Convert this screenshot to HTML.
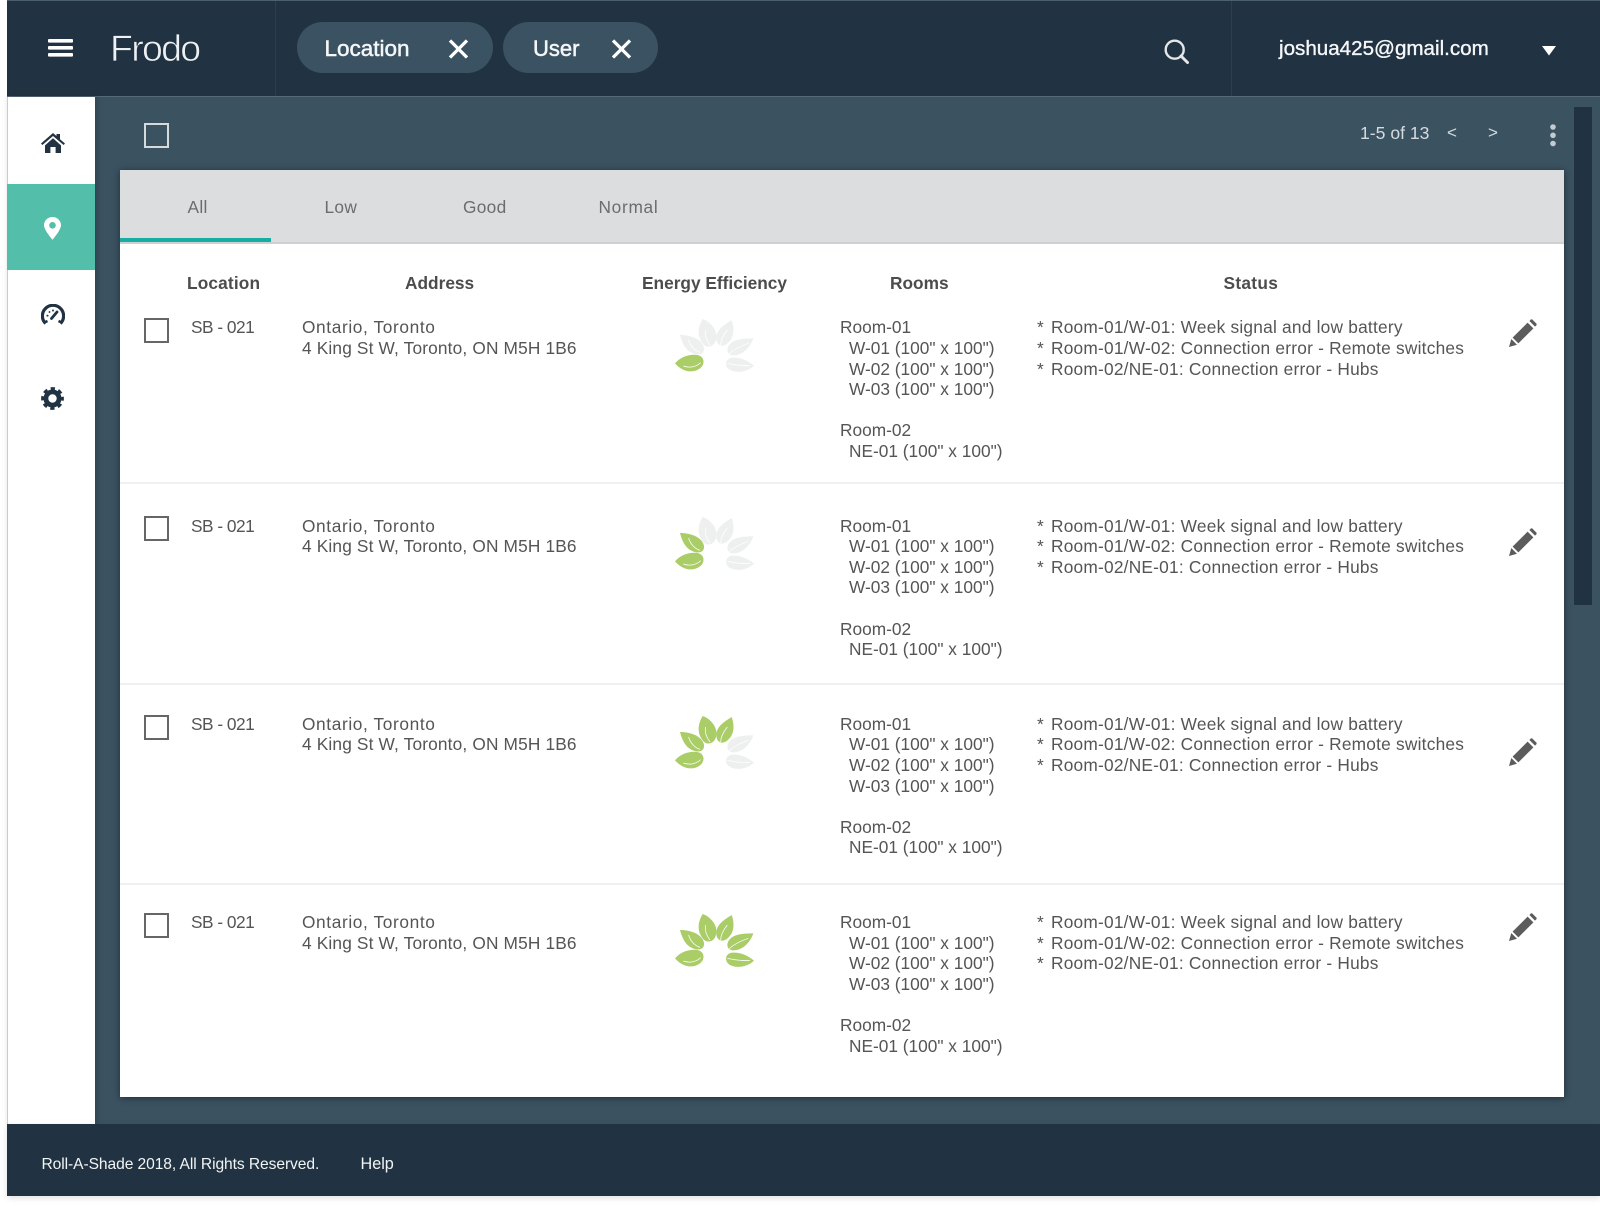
<!DOCTYPE html>
<html lang="en"><head><meta charset="utf-8"><title>Frodo</title>
<style>
html,body{margin:0;padding:0;background:#fff;width:1600px;height:1206px;overflow:hidden}
body{position:relative;font-family:"Liberation Sans",Arial,sans-serif;color:#555}
.a{position:absolute}
#main{left:6.5px;top:96px;width:1593.5px;height:1028px;background:#3b5261}
#hdr{left:6.5px;top:0;width:1593.5px;background:#213342;border-top:1px solid #4a6070;border-bottom:1px solid #55697a;box-sizing:border-box;height:97px}
.sep{top:1px;width:1px;height:95px;background:#2c3f4e}
.chip{top:22px;height:51px;border-radius:26px;background:#3a5261}
.chipt{top:36px;font-size:22.5px;line-height:26px;color:#f4f6f7;-webkit-text-stroke:.5px #f4f6f7}
#side{left:6.5px;top:97px;width:88px;height:1027px;background:#fff;border-left:1px solid #ccc;box-sizing:border-box;box-shadow:2px 0 6px rgba(0,0,0,.22)}
#active{left:6.5px;top:183.5px;width:88px;height:86px;background:#53bfaa}
#foot{left:6.5px;top:1124px;width:1593.5px;height:72px;background:#213342;box-shadow:0 2px 6px rgba(0,0,0,.12)}
#card{left:120px;top:170px;width:1444px;height:927px;background:#fff;box-shadow:0 1px 7px rgba(0,0,0,.45)}
#tabs{left:120px;top:170px;width:1444px;background:#dcddde;border-bottom:2px solid #cfd0d1;box-sizing:border-box;height:74px}
.tab{top:197px;font-size:17.3px;line-height:21px;color:#6a6d70;letter-spacing:.3px}
.th{top:273px;font-size:17.3px;line-height:21px;font-weight:bold;color:#4c4c4c}
.row{left:120px;width:1444px;height:0}
.t{font-size:17.3px;line-height:20.6px;color:#555;white-space:nowrap}
.i{padding-left:9px}
.sb{letter-spacing:-.5px}
.on{letter-spacing:.62px}
.ad{letter-spacing:.16px}
.st{letter-spacing:.23px}
.st b{font-weight:normal;margin-right:2px}
.sepr{left:0;width:1444px;height:2px;background:#f0f0f0;top:165px}
.cb{left:144px;width:25px;height:25px;border:2px solid #666;box-sizing:border-box}
.g{fill:#aacd68}.n{fill:#eef0ef}
.v{fill:none;stroke:#fff;stroke-width:2.2}
</style></head><body>
<svg width="0" height="0" style="position:absolute"><defs>
<path id="p1" d="M105 205C120 186 150 176 172 180C194 184 196 208 180 220C155 238 125 228 105 205Z"/>
<path id="p2" d="M120 120C150 120 180 130 190 152C197 170 186 181 168 178C140 172 128 150 120 120Z"/>
<path id="p3" d="M188 72C212 80 236 108 228 135C222 158 198 160 188 145C170 122 174 95 188 72Z"/>
<path id="p4" d="M275 75C284 100 284 130 260 147C245 158 228 150 229 128C230 102 255 88 275 75Z"/>
<path id="p5" d="M340 130C330 158 308 181 280 181C260 181 257 160 270 147C285 131 315 130 340 130Z"/>
<path id="p6" d="M342 212C322 232 288 236 268 224C252 212 256 191 276 188C302 186 326 198 342 212Z"/>
<path id="v1" class="v" d="M130 213C150 220 170 215 182 203"/>
<path id="v2" class="v" d="M146 135C150 152 165 168 180 172"/>
<path id="v3" class="v" d="M196 105C194 125 202 140 210 150"/>
<path id="v4" class="v" d="M262 105C250 120 242 135 242 150"/>
<path id="v5" class="v" d="M268 176C285 160 305 152 325 145"/>
<path id="v6" class="v" d="M262 205C285 210 310 212 330 212"/>
<g id="pen" fill="#5c5c5c"><path d="M0 28L2.3 20L8 25.7Z"/><path d="M3.6 18.6L18.6 3.6L24.4 9.4L9.4 24.4Z"/><path d="M20.4 2L21.8 .6Q22.6 0 23.4 .6L27.4 4.6Q28 5.4 27.4 6.2L26 7.6Z"/></g>
</defs></svg>

<div class="a" id="main"></div>
<div class="a" id="hdr"></div>
<div class="a sep" style="left:275px"></div>
<div class="a sep" style="left:1230.5px"></div>

<svg class="a" style="left:47.5px;top:38px" width="25" height="19" viewBox="0 0 25 19"><rect y="1" width="25" height="3.6" rx="1" fill="#fff"/><rect y="8" width="25" height="3.6" rx="1" fill="#fff"/><rect y="15" width="25" height="3.6" rx="1" fill="#fff"/></svg>
<div class="a" style="left:110px;top:26.5px;font-size:37.5px;line-height:42px;letter-spacing:-1.7px;color:#eef1f3;-webkit-text-stroke:.7px #213342">Frodo</div>

<div class="a chip" style="left:296.5px;width:196.5px"></div>
<div class="a chipt" style="left:324.5px">Location</div>
<svg class="a" style="left:448px;top:39px" width="21" height="20" viewBox="0 0 21 20"><path d="M2 1.5L19 18.5M19 1.5L2 18.5" stroke="#fff" stroke-width="3.3" fill="none"/></svg>
<div class="a chip" style="left:503px;width:154.5px"></div>
<div class="a chipt" style="left:533px;font-size:22px">User</div>
<svg class="a" style="left:611px;top:39px" width="21" height="20" viewBox="0 0 21 20"><path d="M2 1.5L19 18.5M19 1.5L2 18.5" stroke="#fff" stroke-width="3.3" fill="none"/></svg>

<svg class="a" style="left:1164px;top:39px" width="25" height="25" viewBox="0 0 25 25"><circle cx="10.7" cy="10.7" r="9" fill="none" stroke="#e3e7ea" stroke-width="2.4"/><path d="M17 17L23.5 23.5" stroke="#e3e7ea" stroke-width="3" stroke-linecap="round"/></svg>
<div class="a" style="left:1279px;top:36px;font-size:20.6px;line-height:26px;color:#f6f7f8;-webkit-text-stroke:.35px #f6f7f8;white-space:nowrap">joshua425@gmail.com</div>
<svg class="a" style="left:1542px;top:46px" width="14" height="10" viewBox="0 0 14 10"><path d="M0 0H14L7 9.5Z" fill="#fff"/></svg>

<div class="a" id="side"></div>
<div class="a" id="active"></div>
<svg class="a" style="left:41px;top:133px" width="24" height="20" viewBox="0 0 24 20"><path d="M0 10.5L12 0L15.5 3V1H19V6.2L24 10.5L22.6 12L12 3L1.4 12Z" fill="#213342"/><path d="M4 12.4L12 5.2L20 12.4V20H14.6V14H9.4V20H4Z" fill="#213342"/></svg>
<svg class="a" style="left:44px;top:216.5px" width="17" height="23" viewBox="0 0 17 23"><path fill-rule="evenodd" d="M8.5 0C3.8 0 0 3.6 0 8.2C0 13 8.5 22.7 8.5 22.7C8.5 22.7 17 13 17 8.2C17 3.6 13.2 0 8.5 0ZM8.5 5A3.3 3.3 0 1 1 8.5 11.6A3.3 3.3 0 1 1 8.5 5Z" fill="#fff"/></svg>
<svg class="a" style="left:41px;top:303.5px" width="24" height="21" viewBox="0 0 24 21"><path d="M4.6 19.5A10.6 10.6 0 1 1 19.4 19.5" fill="none" stroke="#213342" stroke-width="3.2"/><path d="M2.5 19L6.5 17M17.5 17L21.5 19" stroke="#213342" stroke-width="2.4"/><path d="M10.5 14.5L16 8" stroke="#213342" stroke-width="2.8" stroke-linecap="round"/><path d="M5.6 11.5L7.4 11.8M8 7.4L9 8.6M12 5.6V7.4" stroke="#213342" stroke-width="1.7"/></svg>
<svg class="a" style="left:41px;top:386.5px" width="23" height="23" viewBox="0 0 23 23"><circle cx="11.5" cy="11.5" r="6.6" fill="none" stroke="#213342" stroke-width="4.8"/><circle cx="11.5" cy="11.5" r="9.8" fill="none" stroke="#213342" stroke-width="3.2" stroke-dasharray="4.2 3.5" stroke-dashoffset="2.1"/></svg>

<div class="a cb" style="top:123px;border-color:#d5dadd"></div>
<div class="a" style="left:1360px;top:122px;font-size:17.6px;line-height:22px;color:#d5dcdf;white-space:nowrap">1-5 of 13</div>
<div class="a" style="left:1447px;top:122px;font-size:17px;line-height:22px;color:#d5dcdf">&lt;</div>
<div class="a" style="left:1488px;top:122px;font-size:17px;line-height:22px;color:#d5dcdf">&gt;</div>
<svg class="a" style="left:1549px;top:124px" width="8" height="24" viewBox="0 0 8 24"><circle cx="4" cy="3" r="2.8" fill="#c2ccd2"/><circle cx="4" cy="11.3" r="2.8" fill="#c2ccd2"/><circle cx="4" cy="19.5" r="2.8" fill="#c2ccd2"/></svg>
<div class="a" style="left:1574px;top:107px;width:18px;height:498px;background:#213342"></div>

<div class="a" id="card"></div>
<div class="a" id="tabs"></div>
<div class="a" style="left:120px;top:238px;width:150.5px;height:4px;background:#17ada0"></div>
<div class="a tab" style="left:187.5px">All</div>
<div class="a tab" style="left:324.5px">Low</div>
<div class="a tab" style="left:463px">Good</div>
<div class="a tab" style="left:598.5px;letter-spacing:.7px">Normal</div>

<div class="a th" style="left:187px;letter-spacing:.15px">Location</div>
<div class="a th" style="left:405px">Address</div>
<div class="a th" style="left:642px">Energy Efficiency</div>
<div class="a th" style="left:890px">Rooms</div>
<div class="a th" style="left:1223.5px;letter-spacing:.3px">Status</div>

<!-- Row 1 -->
<div class="a row" style="top:317.4px">
<div class="a t sb" style="left:71px">SB - 021</div>
<div class="a t" style="left:182px"><span class="on">Ontario, Toronto</span><br><span class="ad">4 King St W, Toronto, ON M5H 1B6</span></div>
<div class="a t" style="left:720px">Room-01<br><span class="i">W-01 (100" x 100")</span><br><span class="i">W-02 (100" x 100")</span><br><span class="i">W-03 (100" x 100")</span><br><br>Room-02<br><span class="i">NE-01 (100" x 100")</span></div>
<div class="a t st" style="left:917px"><b>*</b> Room-01/W-01: Week signal and low battery<br><b>*</b> Room-01/W-02: Connection error - Remote switches<br><b>*</b> Room-02/NE-01: Connection error - Hubs</div>
<div class="a sepr"></div>
</div>
<!-- Row 2 -->
<div class="a row" style="top:515.6px">
<div class="a t sb" style="left:71px">SB - 021</div>
<div class="a t" style="left:182px"><span class="on">Ontario, Toronto</span><br><span class="ad">4 King St W, Toronto, ON M5H 1B6</span></div>
<div class="a t" style="left:720px">Room-01<br><span class="i">W-01 (100" x 100")</span><br><span class="i">W-02 (100" x 100")</span><br><span class="i">W-03 (100" x 100")</span><br><br>Room-02<br><span class="i">NE-01 (100" x 100")</span></div>
<div class="a t st" style="left:917px"><b>*</b> Room-01/W-01: Week signal and low battery<br><b>*</b> Room-01/W-02: Connection error - Remote switches<br><b>*</b> Room-02/NE-01: Connection error - Hubs</div>
<div class="a sepr" style="top:167px"></div>
</div>
<!-- Row 3 -->
<div class="a row" style="top:713.8px">
<div class="a t sb" style="left:71px">SB - 021</div>
<div class="a t" style="left:182px"><span class="on">Ontario, Toronto</span><br><span class="ad">4 King St W, Toronto, ON M5H 1B6</span></div>
<div class="a t" style="left:720px">Room-01<br><span class="i">W-01 (100" x 100")</span><br><span class="i">W-02 (100" x 100")</span><br><span class="i">W-03 (100" x 100")</span><br><br>Room-02<br><span class="i">NE-01 (100" x 100")</span></div>
<div class="a t st" style="left:917px"><b>*</b> Room-01/W-01: Week signal and low battery<br><b>*</b> Room-01/W-02: Connection error - Remote switches<br><b>*</b> Room-02/NE-01: Connection error - Hubs</div>
<div class="a sepr" style="top:169px"></div>
</div>
<!-- Row 4 -->
<div class="a row" style="top:912px">
<div class="a t sb" style="left:71px">SB - 021</div>
<div class="a t" style="left:182px"><span class="on">Ontario, Toronto</span><br><span class="ad">4 King St W, Toronto, ON M5H 1B6</span></div>
<div class="a t" style="left:720px">Room-01<br><span class="i">W-01 (100" x 100")</span><br><span class="i">W-02 (100" x 100")</span><br><span class="i">W-03 (100" x 100")</span><br><br>Room-02<br><span class="i">NE-01 (100" x 100")</span></div>
<div class="a t st" style="left:917px"><b>*</b> Room-01/W-01: Week signal and low battery<br><b>*</b> Room-01/W-02: Connection error - Remote switches<br><b>*</b> Room-02/NE-01: Connection error - Hubs</div>
</div>

<div class="a cb" style="top:318px"></div>
<div class="a cb" style="top:516px"></div>
<div class="a cb" style="top:714.5px"></div>
<div class="a cb" style="top:913px"></div>

<svg class="a" style="left:640px;top:295px" width="140" height="100" viewBox="0 0 420 300">
<use href="#p1" class="g"/><use href="#v1"/>
<use href="#p2" class="n"/><use href="#v2"/>
<use href="#p3" class="n"/><use href="#v3"/>
<use href="#p4" class="n"/><use href="#v4"/>
<use href="#p5" class="n"/><use href="#v5"/>
<use href="#p6" class="n"/><use href="#v6"/>
</svg>
<svg class="a" style="left:640px;top:493.3px" width="140" height="100" viewBox="0 0 420 300">
<use href="#p1" class="g"/><use href="#v1"/>
<use href="#p2" class="g"/><use href="#v2"/>
<use href="#p3" class="n"/><use href="#v3"/>
<use href="#p4" class="n"/><use href="#v4"/>
<use href="#p5" class="n"/><use href="#v5"/>
<use href="#p6" class="n"/><use href="#v6"/>
</svg>
<svg class="a" style="left:640px;top:691.6px" width="140" height="100" viewBox="0 0 420 300">
<use href="#p1" class="g"/><use href="#v1"/>
<use href="#p2" class="g"/><use href="#v2"/>
<use href="#p3" class="g"/><use href="#v3"/>
<use href="#p4" class="g"/><use href="#v4"/>
<use href="#p5" class="n"/><use href="#v5"/>
<use href="#p6" class="n"/><use href="#v6"/>
</svg>
<svg class="a" style="left:640px;top:890px" width="140" height="100" viewBox="0 0 420 300">
<use href="#p1" class="g"/><use href="#v1"/>
<use href="#p2" class="g"/><use href="#v2"/>
<use href="#p3" class="g"/><use href="#v3"/>
<use href="#p4" class="g"/><use href="#v4"/>
<use href="#p5" class="g"/><use href="#v5"/>
<use href="#p6" class="g"/><use href="#v6"/>
</svg>

<svg class="a" style="left:1509px;top:318.5px" width="28" height="28" viewBox="0 0 28 28"><use href="#pen"/></svg>
<svg class="a" style="left:1509px;top:528px" width="28" height="28" viewBox="0 0 28 28"><use href="#pen"/></svg>
<svg class="a" style="left:1509px;top:738px" width="28" height="28" viewBox="0 0 28 28"><use href="#pen"/></svg>
<svg class="a" style="left:1509px;top:912.5px" width="28" height="28" viewBox="0 0 28 28"><use href="#pen"/></svg>

<div class="a" id="foot"></div>
<div class="a" style="left:41.5px;top:1154.5px;font-size:15.6px;line-height:20px;letter-spacing:-.08px;color:#f2f4f5;white-space:nowrap">Roll-A-Shade 2018, All Rights Reserved.</div>
<div class="a" style="left:360.5px;top:1154px;font-size:16.2px;line-height:20px;color:#f2f4f5">Help</div>
</body></html>
